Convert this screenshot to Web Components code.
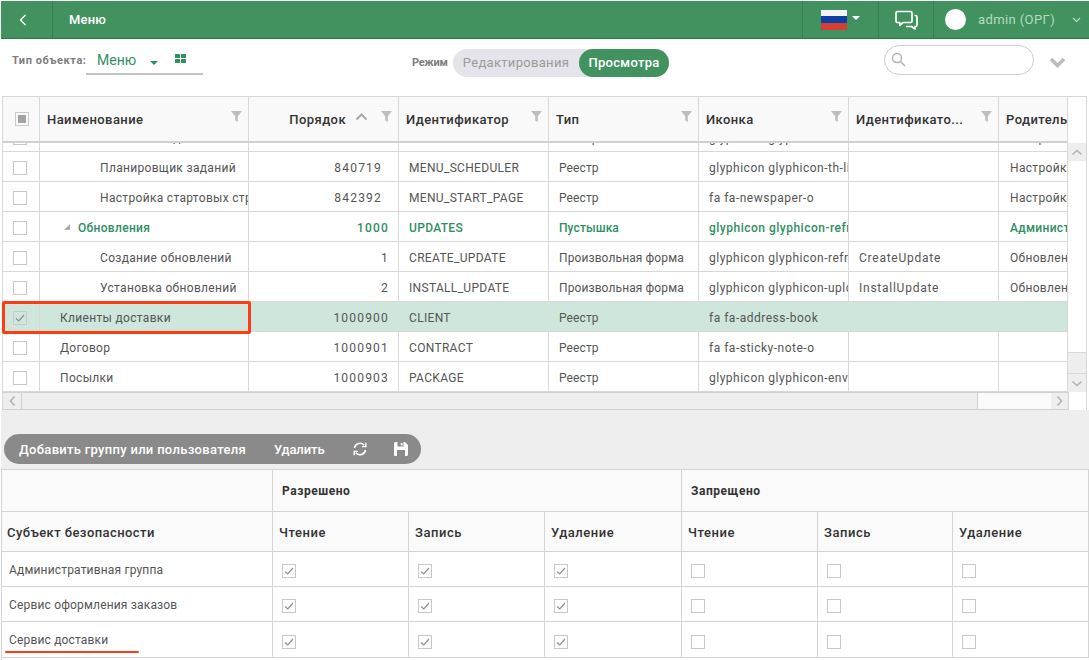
<!DOCTYPE html>
<html lang="ru">
<head>
<meta charset="utf-8">
<title>Меню</title>
<style>
    html, body { margin: 0; height: 100%; overflow: hidden; background: #fff; }
    body { font-family: Roboto, "Liberation Sans", sans-serif; font-size: 12px; color: #444; padding: 1px 0 0 1px; box-sizing: border-box; }
</style>
</head>
<body>
<app-page>
    <top-bar slot="top" title="Меню" user="admin (ОРГ)"></top-bar>
    <filter-bar slot="top"></filter-bar>
    <menu-grid slot="top"></menu-grid>
    <perm-toolbar></perm-toolbar>
    <perm-table></perm-table>
</app-page>

<script>
const FILTER = `<svg class="flt" width="11" height="11" viewBox="0 0 11 11"><path d="M0 0h11L6.8 5.2V11L4.2 9.4V5.2z" fill="#bdbdbd"/></svg>`;

class AppPage extends HTMLElement {
    constructor() {
        super();
        this.attachShadow({ mode: "open" });
        this.shadowRoot.innerHTML = `
        <style>
            :host { display: flex; flex-direction: column; width: 1088px; height: 659px; background: #eeeeee; }
            .top { display: block; background: #fff; }
        </style>
        <div class="top"><slot name="top"></slot></div>
        <slot></slot>`;
    }
}

class TopBar extends HTMLElement {
    constructor() {
        super();
        this.attachShadow({ mode: "open" });
    }
    connectedCallback() {
        this.shadowRoot.innerHTML = `
        <style>
            :host { display: flex; height: 37px; background: #42925f; border-bottom: 1px solid #2f7a4b; color: #fff; align-items: stretch; }
            .back { width: 44px; border-right: 1px solid #358052; display: flex; align-items: center; justify-content: center; padding-right: 7px; }
            .title { flex: 1; padding: 0 0 0 16px; line-height: 37px; font-size: 13px; font-weight: 500; letter-spacing: .2px; }
            .cell { border-left: 1px solid #358052; display: flex; align-items: center; }
            .lang { width: 76px; padding-left: 18px; box-sizing: border-box; gap: 5px; }
            .chat { width: 54px; justify-content: center; }
            .user { width: 156px; padding-left: 11px; box-sizing: border-box; }
            .flag { width: 26px; height: 20px; display: flex; flex-direction: column; }
            .flag i { flex: 1; }
            .caret { width: 0; height: 0; border: 4px solid transparent; border-top: 4px solid #fff; border-bottom: 0; margin-top: -3px; }
            .ava { width: 21px; height: 21px; border-radius: 50%; background: #fff; }
            .name { margin-left: 12px; font-size: 13px; letter-spacing: .4px; color: #b5dcc3; width: 94px; white-space: nowrap; }
        </style>
        <div class="back"><svg width="8" height="12" viewBox="0 0 8 12"><path d="M6.5 1L1.5 6l5 5" fill="none" stroke="#fff" stroke-width="1.3"/></svg></div>
        <div class="title">${this.getAttribute("title")}</div>
        <div class="cell lang">
            <div class="flag"><i style="background:#f4f4f4"></i><i style="background:#0f3ea3"></i><i style="background:#d43f33"></i></div>
            <span class="caret"></span>
        </div>
        <div class="cell chat">
            <svg width="23" height="20" viewBox="0 0 23 20" fill="none" stroke="#fff" stroke-width="1.7" stroke-linejoin="round"><path d="M2.5 1.5h13a1.5 1.5 0 0 1 1.5 1.5v8a1.5 1.5 0 0 1-1.5 1.5H8L4.8 15.3V12.500H2.500A1.500 1.500 0 0 1 1 11V3a1.500 1.500 0 0 1 1.500-1.500z"/><path d="M19.500 5.500H20.500A1.500 1.500 0 0 1 22 7V15a1.500 1.500 0 0 1-1.500 1.500H20V19L16.500 16.500H11"/></svg>
        </div>
        <div class="cell user">
            <div class="ava"></div>
            <span class="name">${this.getAttribute("user")}</span>
            <svg width="9" height="6" viewBox="0 0 9 6"><path d="M1 1l3.500 3.500L8 1" fill="none" stroke="#b5dcc3" stroke-width="1.200"/></svg>
        </div>`;
    }
}

class FilterBar extends HTMLElement {
    constructor() {
        super();
        this.attachShadow({ mode: "open" });
        this.shadowRoot.innerHTML = `
        <style>
            :host { display: flex; height: 57px; background: #fff; box-sizing: border-box; position: relative; }
            .type { width: 411px; display: flex; align-items: flex-start; padding: 0 0 0 11px; box-sizing: border-box; }
            .lbl { font-size: 11px; font-weight: 700; color: #7d7d7d; letter-spacing: .55px; margin-top: 15px; width: 74px; white-space: nowrap; }
            .sel { margin-top: 10px; width: 117px; height: 26px; box-sizing: border-box; border-bottom: 2px solid #c4c4c4; display: flex; padding-left: 11px; color: #2f8f5f; font-size: 14px; letter-spacing: 0; line-height: 22px; position: relative; }
            .sel .c { width: 0; height: 0; border: 4px solid transparent; border-top-color: #2f8f5f; border-bottom: 0; margin: 12px 0 0 14px; }
            .sel svg { margin: 5px 0 0 17px; }
            .mode { display: flex; align-items: center; width: 472px; margin-top: -10px; }
            .mode b { font-size: 11px; color: #7d7d7d; width: 41px; letter-spacing: -.3px; }
            .pill { width: 216px; height: 28px; border-radius: 14px; background: #e4e4ea; display: flex; font-size: 13px; line-height: 28px; letter-spacing: .3px; }
            .pill span { color: #9b9b9b; width: 126px; text-align: center; }
            .pill em { font-style: normal; flex: 1; background: #42925f; color: #fff; border-radius: 14px; text-align: center; font-weight: 500; letter-spacing: .3px; }
            .search { width: 150px; height: 30px; box-sizing: border-box; border: 1px solid #ccc; border-radius: 15px; margin-top: 6px; padding: 6px 0 0 6px; }
            .more { margin: 18px 0 0 15px; }
        </style>
        <div class="type">
            <span class="lbl">Тип объекта:</span>
            <div class="sel">Меню<span class="c"></span>
                <svg width="11" height="9" viewBox="0 0 11 9" fill="#2f8f5f"><rect width="5" height="4" rx=".6"/><rect x="6" width="5" height="4" rx=".6"/><rect y="5" width="5" height="4" rx=".6"/><rect x="6" y="5" width="5" height="4" rx=".6"/></svg>
            </div>
        </div>
        <div class="mode"><b>Режим</b><div class="pill"><span>Редактирования</span><em>Просмотра</em></div></div>
        <div class="search"><svg width="15" height="15" viewBox="0 0 15 15" fill="none" stroke="#b3b3b3" stroke-width="1.500"><circle cx="6" cy="6" r="4.500"/><path d="M9.500 9.500L14 14"/></svg></div>
        <svg class="more" width="17" height="11" viewBox="0 0 17 11"><path d="M2 2l6.500 6.500L15 2" fill="none" stroke="#bdbdbd" stroke-width="3.600"/></svg>`;
    }
}

class CheckMark extends HTMLElement {
    constructor() {
        super();
        this.attachShadow({ mode: "open" });
    }
    connectedCallback() {
        let inner = "";
        if (this.hasAttribute("checked")) inner = `<svg width="12" height="12" viewBox="0 0 12 12"><path d="M2 6.500l2.800 2.500L10 3" fill="none" stroke="#8e8e8e" stroke-width="1.200"/></svg>`;
        if (this.hasAttribute("partial")) inner = `<i></i>`;
        this.shadowRoot.innerHTML = `
        <style>
            :host { display: inline-flex; width: 12px; height: 12px; border: 1px solid #c9c9c9; background: transparent; align-items: center; justify-content: center; flex: none; }
            i { width: 8px; height: 8px; background: #a3a3a3; }
        </style>${inner}`;
    }
}

const COLS = "37px 209px 150px 150px 150px 150px 150px 70px";
const GRID_HEAD = [
    ["Наименование", ""],
    ["Порядок", "sort"],
    ["Идентификатор", ""],
    ["Тип", ""],
    ["Иконка", ""],
    ["Идентификато...", ""],
    ["Родитель", "nofilter"]
];
const GRID_ROWS = [
    ["Шаблоны заданий", "840700", "MENU_TEMPLATES", "Реестр", "glyphicon glyphicon-th", "", "Настройки", 2],
    ["Планировщик заданий", "840719", "MENU_SCHEDULER", "Реестр", "glyphicon glyphicon-th-list", "", "Настройки", 2],
    ["Настройка стартовых страниц", "842392", "MENU_START_PAGE", "Реестр", "fa fa-newspaper-o", "", "Настройки", 2],
    ["Обновления", "1000", "UPDATES", "Пустышка", "glyphicon glyphicon-refresh", "", "Администрирование", 1, "green"],
    ["Создание обновлений", "1", "CREATE_UPDATE", "Произвольная форма", "glyphicon glyphicon-refresh", "CreateUpdate", "Обновления", 2],
    ["Установка обновлений", "2", "INSTALL_UPDATE", "Произвольная форма", "glyphicon glyphicon-upload", "InstallUpdate", "Обновления", 2],
    ["Клиенты доставки", "1000900", "CLIENT", "Реестр", "fa fa-address-book", "", "", 0, "sel"],
    ["Договор", "1000901", "CONTRACT", "Реестр", "fa fa-sticky-note-o", "", "", 0],
    ["Посылки", "1000903", "PACKAGE", "Реестр", "glyphicon glyphicon-envelope", "", "", 0]
];

class MenuGrid extends HTMLElement {
    constructor() {
        super();
        this.attachShadow({ mode: "open" });
    }
    connectedCallback() {
        const head = GRID_HEAD.map(([t, kind]) => `
            <div class="th ${kind === "sort" ? "r" : ""}">
                <span class="t">${t}</span>
                ${kind === "sort" ? `<svg class="sort" width="13" height="8" viewBox="0 0 13 8"><path d="M1.500 6.500l5-5 5 5" fill="none" stroke="#a8a8a8" stroke-width="2"/></svg>` : ""}
                ${kind === "nofilter" ? "" : FILTER}
            </div>`).join("");
        const rows = GRID_ROWS.map(r => {
            const pad = [20, 26, 60][r[7]];
            const tri = r[7] === 1 ? `<svg class="tri" width="6" height="6" viewBox="0 0 6 6"><path d="M6 0v6H0z" fill="#aaa"/></svg>` : "";
            return `<div class="row ${r[8] || ""}">
                <div class="td c"><check-mark ${r[8] === "sel" ? "checked" : ""}></check-mark></div>
                <div class="td n" style="padding-left:${pad}px">${tri}${r[0]}</div>
                <div class="td o ${r[1].length === 6 ? "in" : ""}">${r[1]}</div>
                <div class="td">${r[2]}</div>
                <div class="td ty">${r[3]}</div>
                <div class="td ic">${r[4]}</div>
                <div class="td cid">${r[5]}</div>
                <div class="td par">${r[6]}</div>
            </div>`;
        }).join("");
        this.shadowRoot.innerHTML = `
        <style>
            :host { display: block; height: 314px; margin-left: 1px; width: 1085px; border-left: 1px solid #d8d8d8; border-top: 1px solid #d8d8d8; border-right: 1px solid #d8d8d8; box-sizing: border-box; position: relative; background: #fff; }
            .head, .row { display: grid; grid-template-columns: ${COLS}; }
            .head { height: 46px; width: 1066px; box-sizing: border-box; background: #f9f9f9; border-bottom: 2px solid #d0d0d0; }
            .th { border-right: 1px solid #d8d8d8; display: flex; align-items: center; padding: 0 7px; font-size: 13px; font-weight: 500; color: #333; letter-spacing: .42px; white-space: nowrap; overflow: hidden; position: relative; }
            .th:first-child { padding: 0 0 0 2px; justify-content: center; }
            .th.r { justify-content: flex-end; padding-right: 52px; }
            .th:last-child { border-right: 0; }
            .flt { position: absolute; right: 6px; top: 14px; }
            .sort { position: absolute; right: 30px; top: 16px; }
            .main { display: flex; height: 249px; }
            .scroll { width: 1066px; height: 249px; overflow: hidden; }
            .row { height: 30px; box-sizing: border-box; border-bottom: 1px solid #d8d8d8; color: #555; font-size: 12px; letter-spacing: .32px; }
            .row.green { color: #2f8f5f; font-weight: 500; }
            .row.sel { background: #cfe6dd; }
            .td { border-right: 1px solid #d8d8d8; padding: 0 0 0 10px; line-height: 32px; white-space: nowrap; overflow: hidden; }
            .td:last-child { border-right: 0; }
            .td.c { padding: 2px 2px 0 0; box-sizing: border-box; display: flex; align-items: center; justify-content: center; }
            .td.n { position: relative; }
            .td.o { text-align: right; padding: 0 9px 0 0; letter-spacing: 1.2px; }
            .td.o.in { padding-right: 16px; }
            .td.ty { letter-spacing: .1px; }
            .td.ic { letter-spacing: .5px; }
            .td.cid { letter-spacing: .75px; }
            .td.par { padding-left: 11px; }
            .tri { margin: 0 8px 2px -2px; }
            .sel .td { border-right-color: #cfe6dd; }
            .sel .td.c, .sel .td.n { border-right-color: #d8d8d8; }
            .vbar { width: 18px; border-left: 1px solid #d8d8d8; display: flex; flex-direction: column; background: #fff; margin-top: -46px; height: 295px; }
            .vbar .top { height: 46px; background: #fff; }
            .btn { height: 18px; background: #eeeeee; display: flex; align-items: center; justify-content: center; flex: none; }
            .thumb { height: 191px; background: #fff; border-bottom: 1px solid #d8d8d8; flex: none; }
            .track { flex: 1; background: #eeeeee; border-bottom: 1px solid #d8d8d8; }
            .hbar { height: 18px; display: flex; border-top: 1px solid #d0d0d0; border-bottom: 1px solid #d0d0d0; box-sizing: border-box; background: #eeeeee; width: 1066px; }
            .hbtn { width: 18px; border-right: 1px solid #d0d0d0; display: flex; align-items: center; justify-content: center; }
            .htrack { flex: 1; }
            .hthumb { width: 73px; background: #fafafa; border-left: 1px solid #d0d0d0; }
            .hbtn.right { border-right: 1px solid #d0d0d0; width: 17px; }
            .mark { position: absolute; left: -1px; top: 204px; width: 249px; height: 33px; box-sizing: border-box; border: 3px solid #ff3b12; border-radius: 2px; pointer-events: none; }
        </style>
        <div class="head">
            <div class="th"><check-mark partial></check-mark></div>
            ${head}
        </div>
        <div class="main">
            <div class="scroll" id="s">${rows}</div>
            <div class="vbar">
                <div class="top"></div>
                <div class="btn"><svg width="12" height="7" viewBox="0 0 12 7"><path d="M1.500 5.500l4.500-4 4.500 4" fill="none" stroke="#b0b0b0" stroke-width="1.500"/></svg></div>
                <div class="thumb"></div>
                <div class="track"></div>
                <div class="btn"><svg width="12" height="7" viewBox="0 0 12 7"><path d="M1.500 1.500l4.500 4 4.500-4" fill="none" stroke="#b0b0b0" stroke-width="1.500"/></svg></div>
            </div>
        </div>
        <div class="hbar">
            <div class="hbtn"><svg width="7" height="12" viewBox="0 0 7 12"><path d="M5.500 1.500l-4 4.500 4 4.500" fill="none" stroke="#b0b0b0" stroke-width="1.500"/></svg></div>
            <div class="htrack"></div>
            <div class="hthumb"></div>
            <div class="hbtn right"><svg width="7" height="12" viewBox="0 0 7 12"><path d="M1.500 1.500l4 4.500-4 4.500" fill="none" stroke="#b0b0b0" stroke-width="1.500"/></svg></div>
        </div>
        <div class="mark"></div>`;
        this.shadowRoot.getElementById("s").scrollTop = 21;
    }
}

class PermToolbar extends HTMLElement {
    constructor() {
        super();
        this.attachShadow({ mode: "open" });
        this.shadowRoot.innerHTML = `
        <style>
            :host { display: flex; align-self: flex-start; height: 30px; margin: 24px 0 5px 3px; width: 417px; box-sizing: border-box; background: #8a8a8a; border-radius: 15px; color: #fff; font-size: 13px; font-weight: 500; letter-spacing: .3px; align-items: center; padding-left: 15px; white-space: nowrap; }
            .del { margin-left: 28px; letter-spacing: -.1px; }
            .ref { margin-left: 29px; }
            .sav { margin-left: 27px; }
            svg { flex: none; }
        </style>
        <span>Добавить группу или пользователя</span>
        <span class="del">Удалить</span>
        <svg class="ref" width="14" height="14" viewBox="0 0 14 14" fill="none" stroke="#fff" stroke-width="1.600"><path d="M1.500 6A5.600 5.600 0 0 1 11.300 3.300"/><path d="M12.500 8A5.600 5.600 0 0 1 2.700 10.700"/><path d="M12.800 .8v3.800H9" stroke-width="1.400"/><path d="M1.200 13.200V9.400H5" stroke-width="1.400"/></svg>
        <svg class="sav" width="14" height="14" viewBox="0 0 14 14"><path d="M0 1.500A1.500 1.500 0 0 1 1.500 0H11l3 3v9.500a1.500 1.500 0 0 1-1.500 1.500h-11A1.500 1.500 0 0 1 0 12.500z" fill="#fff"/><rect x="3.500" y="0" width="6" height="4.500" fill="#8a8a8a"/><rect x="6.800" y="1" width="1.700" height="2.500" fill="#fff"/><rect x="3" y="8" width="8" height="6" fill="#8a8a8a"/></svg>`;
    }
}

const PERM_ROWS = ["Административная группа", "Сервис оформления заказов", "Сервис доставки"];

class PermTable extends HTMLElement {
    constructor() {
        super();
        this.attachShadow({ mode: "open" });
    }
    connectedCallback() {
        const labels = ["Чтение", "Запись", "Удаление", "Чтение", "Запись", "Удаление"];
        const rows = PERM_ROWS.map((name, i) => `
            <div class="cell name">${name}</div>
            ${labels.map((_, c) => `<div class="cell box"><check-mark ${c < 3 ? "checked" : ""}></check-mark></div>`).join("")}
        `).join("");
        this.shadowRoot.innerHTML = `
        <style>
            :host { display: grid; grid-template-columns: 271px 136px 136px 137px 136px 135px 136px; grid-template-rows: 42px 40px 35px 35px 36px 1fr; flex: 1; background: #fff; position: relative; border-top: 1px solid #d4d4d4; border-left: 1px solid #d4d4d4; }
            .g { background: #fafafa; border-right: 1px solid #d4d4d4; border-bottom: 1px solid #d4d4d4; font-weight: 700; font-size: 12px; color: #333; padding: 0 0 0 9px; line-height: 42px; letter-spacing: .55px; }
            .g.blank { padding: 0; }
            .h { background: #fafafa; border-right: 1px solid #d4d4d4; border-bottom: 1px solid #d4d4d4; font-size: 13px; font-weight: 500; color: #333; padding-left: 6px; line-height: 42px; letter-spacing: .55px; white-space: nowrap; }
            .h.first { padding-left: 5px; letter-spacing: .42px; }
            .cell { border-right: 1px solid #d4d4d4; border-bottom: 1px solid #d4d4d4; }
            .cell.name { font-size: 12px; color: #555; padding-left: 7px; line-height: 37px; letter-spacing: .17px; white-space: nowrap; }
            .cell.box { display: flex; align-items: center; padding: 4px 0 0 9px; box-sizing: border-box; }
            .foot { grid-column: 1 / -1; background: #fff; }
            .line { position: absolute; left: 3px; top: 181px; width: 134px; height: 2px; border-radius: 1px; background: #ff3b12; }
        </style>
        <div class="g blank"></div>
        <div class="g" style="grid-column: span 3">Разрешено</div>
        <div class="g" style="grid-column: span 3">Запрещено</div>
        <div class="h first">Субъект безопасности</div>
        ${labels.map(l => `<div class="h">${l}</div>`).join("")}
        ${rows}
        <div class="foot"></div>
        <div class="line"></div>`;
    }
}

customElements.define("app-page", AppPage);
customElements.define("top-bar", TopBar);
customElements.define("filter-bar", FilterBar);
customElements.define("check-mark", CheckMark);
customElements.define("menu-grid", MenuGrid);
customElements.define("perm-toolbar", PermToolbar);
customElements.define("perm-table", PermTable);
</script>
</body>
</html>
